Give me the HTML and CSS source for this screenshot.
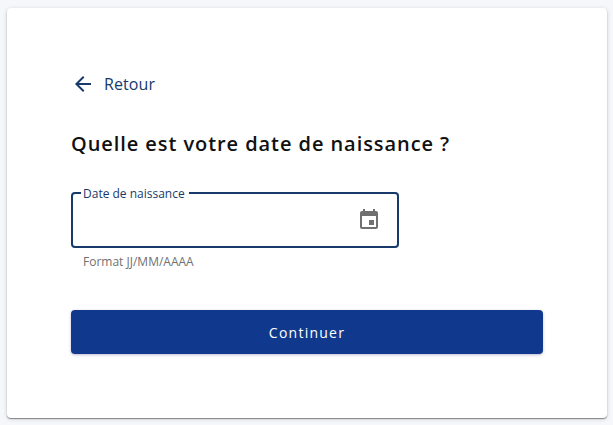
FILE: index.html
```
<!DOCTYPE html>
<html lang="fr">
<head>
  <meta charset="UTF-8" />
  <meta name="viewport" content="width=device-width, initial-scale=1.0" />
  <title>Date de naissance</title>
  <link rel="stylesheet" href="styles.css">
</head>
<body>
  <main class="card">
    <a class="back" href="#">
      <svg class="back-icon" viewBox="0 0 24 24">
        <path d="M20 11H7.83l5.59-5.59L12 4l-8 8 8 8 1.41-1.41L7.83 13H20v-2z" />
      </svg>
      <span>Retour</span>
    </a>

    <h1>Quelle est votre date de naissance ?</h1>

    <form>
      <fieldset class="field">
        <legend>Date de naissance</legend>
        <input type="text" aria-label="Date de naissance" />
        <svg class="calendar-icon" viewBox="0 0 24 24">
          <path d="M17 12h-5v5h5v-5zM16 1v2H8V1H6v2H5c-1.11 0-1.99.9-1.99 2L3 19c0 1.1.89 2 2 2h14c1.1 0 2-.9 2-2V5c0-1.1-.9-2-2-2h-1V1h-2zm3 18H5V8h14v11z" />
        </svg>
      </fieldset>
      <p class="hint">Format JJ/MM/AAAA</p>

      <button type="button">Continuer</button>
    </form>
  </main>
</body>
</html>
```
FILE: styles.css
```
:root {
  --primary: #10398e;
  --navy: #173a6b;
  --bg: #f6f7fb;
  --hint: #707070;
}
* {
  margin: 0;
  padding: 0;
  box-sizing: border-box;
}
body {
  font-family: "Open Sans", "Noto Sans", sans-serif;
  background-color: var(--bg);
  padding: 8px 6px 7px 7px;
}
.card {
  background: #fff;
  height: 410px;
  padding: 64px;
  border-radius: 4px;
  box-shadow: 0 1px 1px rgba(0, 0, 0, 0.4), 0 1px 4px rgba(0, 0, 0, 0.16);
}
.back {
  display: flex;
  align-items: center;
  gap: 9px;
  height: 24px;
  color: var(--navy);
  font-size: 16px;
  letter-spacing: 0.08px;
  text-decoration: none;
}
.back-icon {
  width: 24px;
  height: 24px;
  fill: currentColor;
}
h1 {
  margin-top: 32px;
  font-size: 20px;
  line-height: 32px;
  font-weight: 600;
  letter-spacing: 0.93px;
  color: #111;
  white-space: nowrap;
}
.field {
  display: flex;
  align-items: center;
  width: 328px;
  height: 64px;
  margin-top: 24px;
  padding: 0 16px 9px 8px;
  border: 2px solid var(--navy);
  border-radius: 4px;
}
legend {
  padding: 2px 4px 0 2px;
  font-size: 12px;
  line-height: 16px;
  color: var(--navy);
}
.field input {
  flex: 1;
  min-width: 0;
  height: 30px;
  border: none;
  outline: none;
  background: none;
}
.calendar-icon {
  width: 24px;
  height: 24px;
  fill: #707070;
}
.hint {
  margin-top: 5px;
  padding-left: 12px;
  font-size: 12px;
  line-height: 18px;
  color: var(--hint);
}
button {
  display: block;
  width: 100%;
  height: 44px;
  margin-top: 39px;
  border: none;
  border-radius: 4px;
  background-color: var(--primary);
  color: white;
  font-family: inherit;
  font-size: 14px;
  letter-spacing: 1.25px;
  box-shadow: 0 1px 3px rgba(40, 30, 110, 0.3);
  cursor: pointer;
}
```
